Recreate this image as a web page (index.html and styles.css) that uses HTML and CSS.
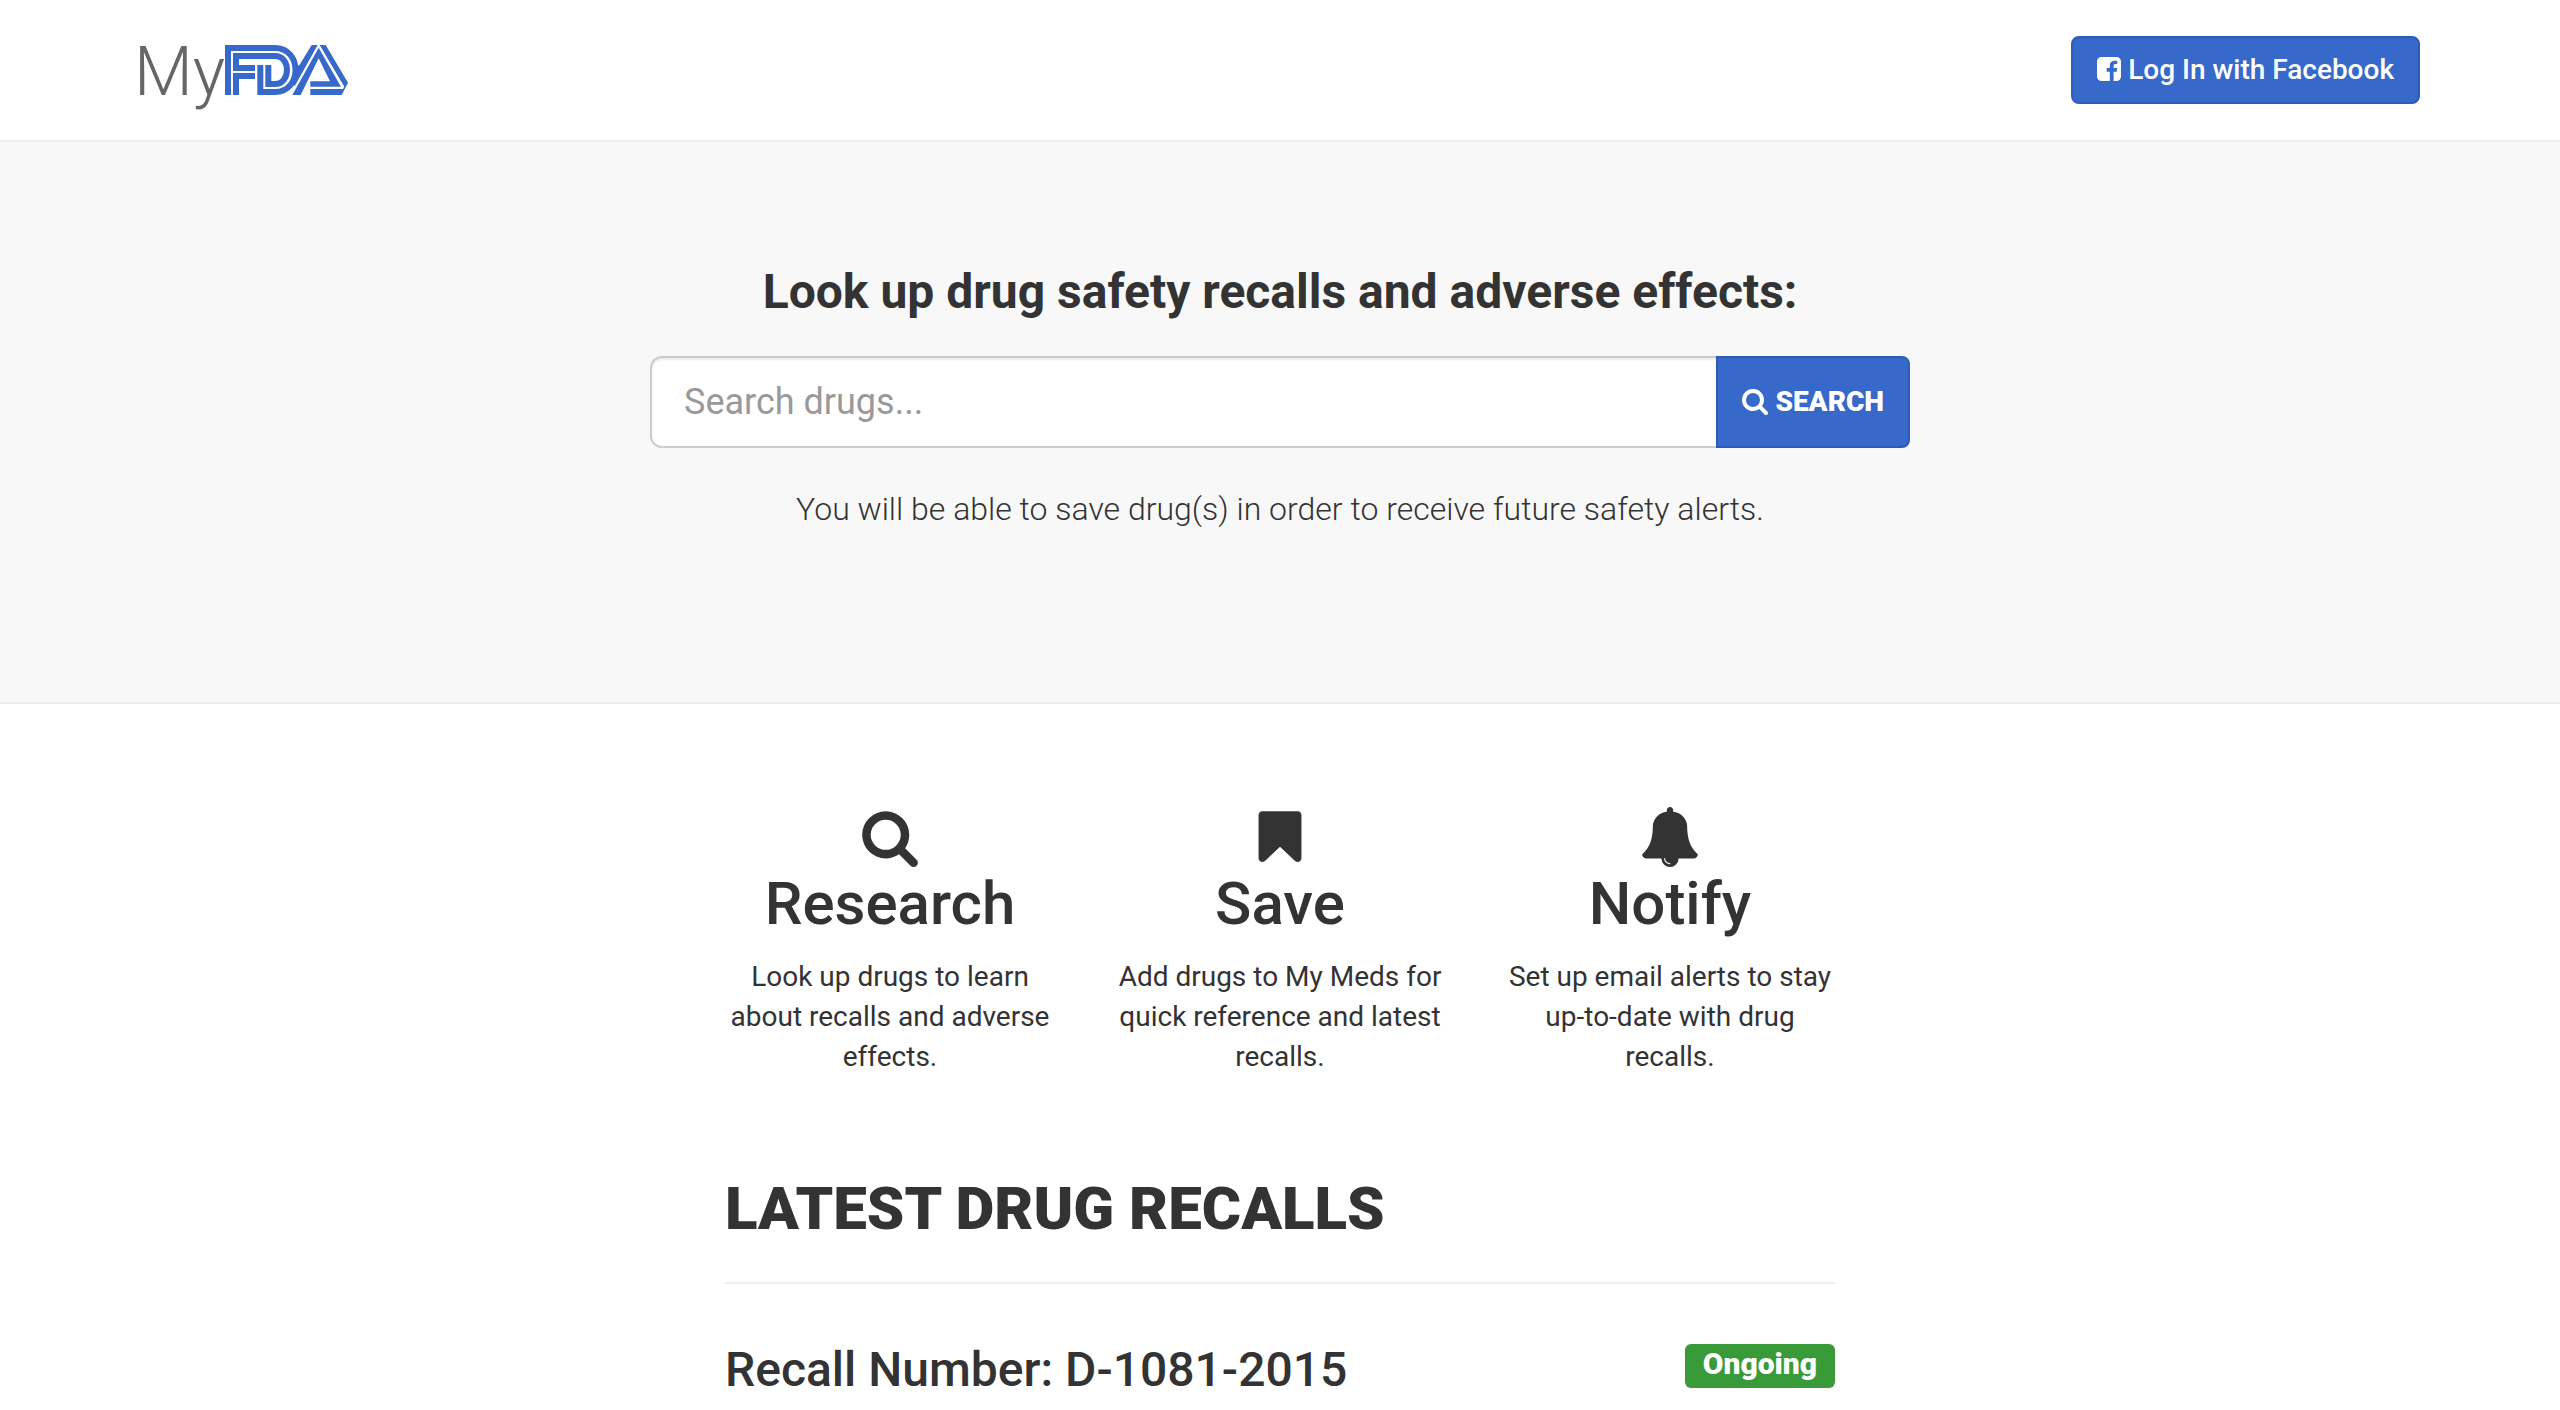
FILE: index.html
```html
<!DOCTYPE html>
<html lang="en">
<head>
<meta charset="utf-8">
<meta name="viewport" content="width=device-width, initial-scale=1">
<title>MyFDA</title>
<link rel="stylesheet" href="styles.css">
</head>
<body>
<header class="site-header">
  <div class="container header-row">
    <a class="brand" href="#">
      <span class="brand-my">My</span>
      <svg class="brand-mark" viewBox="0 0 369 150" role="img" aria-label="FDA">
        <g fill="none" stroke="#3669c9" stroke-width="18">
          <path d="M9 150V9H150C232 9 232 141 150 141H106V60"/>
          <path d="M33 78V33H150C198 33 198 117 150 117H130V60"/>
          <path d="M33 150V93H90M24 69H90"/>
        </g>
        <g fill="#3669c9">
          <path d="M260 0H278L210 122L200 118L214 66L224 59Z"/>
          <path d="M281 8L202 150H227L281 40L315 109H256V125H348Z"/>
          <path d="M284 0H302L369 113L350 150H256V132H354L358 125Z"/>
        </g>
      </svg>
    </a>
    <button class="btn" type="button">
      <svg class="icon" viewBox="0 0 1536 1536" aria-hidden="true"><path d="M1248 0q119 0 203.500 84.500T1536 288v960q0 119-84.500 203.500T1248 1536h-188V941h199l30-232h-229V561q0-56 23.500-84t91.500-28l122-1V241q-63-9-178-9-136 0-217.500 80T820 538v171H620v232h200v595H288q-119 0-203.500-84.500T0 1248V288Q0 169 84.500 84.500T288 0z"/></svg>
      Log In with Facebook
    </button>
  </div>
</header>

<section class="hero">
  <form class="search" role="search">
    <label class="search-title" for="drug">Look up drug safety recalls and adverse effects:</label>
    <div class="input-group">
      <input class="search-input" id="drug" type="text" placeholder="Search drugs...">
      <button class="btn btn-search" type="submit">
        <svg class="icon" viewBox="0 0 1664 1664" aria-hidden="true"><path d="M1152 704q0-185-131.500-316.500T704 256 387.500 387.500 256 704t131.500 316.500T704 1152t316.500-131.500T1152 704zm512 832q0 52-38 90t-90 38q-54 0-90-38l-343-342q-179 124-399 124-143 0-273.500-55.500t-225-150-150-225T0 704t55.500-273.500 150-225 225-150T704 0t273.500 55.500 225 150 150 225T1408 704q0 220-124 399l343 343q37 37 37 90z"/></svg>
        SEARCH
      </button>
    </div>
    <p class="search-note">You will be able to save drug(s) in order to receive future safety alerts.</p>
  </form>
</section>

<main class="content">
  <div class="features">
    <section class="feature">
      <svg class="feature-icon" viewBox="-64 -128 1792 1792" aria-hidden="true"><path d="M1152 704q0-185-131.500-316.500T704 256 387.500 387.500 256 704t131.500 316.500T704 1152t316.500-131.500T1152 704zm512 832q0 52-38 90t-90 38q-54 0-90-38l-343-342q-179 124-399 124-143 0-273.500-55.500t-225-150-150-225T0 704t55.500-273.500 150-225 225-150T704 0t273.500 55.500 225 150 150 225T1408 704q0 220-124 399l343 343q37 37 37 90z"/></svg>
      <h2 class="feature-title">Research</h2>
      <p class="feature-text">Look up drugs to learn about recalls and adverse effects.</p>
    </section>
    <section class="feature">
      <svg class="feature-icon" viewBox="-256 -128 1792 1792" aria-hidden="true"><path d="M1164 0q23 0 44 9 33 13 52.500 41t19.500 62v1289q0 34-19.500 62t-52.500 41q-19 8-44 8-48 0-83-32l-441-424-441 424q-36 33-83 33-23 0-44-9-33-13-52.500-41T0 1401V112q0-34 19.500-62T72 9q21-9 44-9z"/></svg>
      <h2 class="feature-title">Save</h2>
      <p class="feature-text">Add drugs to My Meds for quick reference and latest recalls.</p>
    </section>
    <section class="feature">
      <svg class="feature-icon" viewBox="0 0 1792 1792" aria-hidden="true"><path d="M912 1696q0-16-16-16-59 0-101.500-42.500T752 1536q0-16-16-16t-16 16q0 73 51.500 124.500T896 1712q16 0 16-16zm816-288q0 52-38 90t-90 38h-448q0 106-75 181t-181 75-181-75-75-181H192q-52 0-90-38t-38-90q50-42 91-88t85-119.500 74.500-158.500 50-206T384 576q0-152 117-282.500T808 135q-8-19-8-39 0-40 28-68t68-28 68 28 28 68q0 20-8 39 190 28 307 158.500T1408 576q0 139 19.500 260t50 206 74.500 158.500 85 119.500 91 88z"/></svg>
      <h2 class="feature-title">Notify</h2>
      <p class="feature-text">Set up email alerts to stay up-to-date with drug recalls.</p>
    </section>
  </div>

  <h2 class="recalls-title">LATEST DRUG RECALLS</h2>
  <article class="recall">
    <h3 class="recall-number">Recall Number: D-1081-2015</h3>
    <span class="badge">Ongoing</span>
  </article>
</main>
</body>
</html>
```
FILE: styles.css
```css
* { box-sizing: border-box; }

body {
  margin: 0;
  font-family: Roboto, "Liberation Sans", sans-serif;
  font-size: 28px;
  line-height: 40px;
  color: #333;
  background: #fff;
}

h2, h3, p { margin: 0; }

.site-header { border-bottom: 2px solid #eee; }

.container {
  max-width: 2340px;
  margin: 0 auto;
  padding: 0 30px;
}

.header-row {
  display: flex;
  align-items: center;
  justify-content: space-between;
  padding-top: 36px;
  padding-bottom: 36px;
}

.brand {
  display: flex;
  align-items: baseline;
  height: 68px;
  margin-left: -6px;
  padding-top: 2px;
  color: #666;
  text-decoration: none;
}

.brand-my {
  font-size: 68px;
  font-weight: 300;
  line-height: 68px;
}

.brand-mark { width: 123px; height: 50px; }

.btn {
  padding: 12px 24px;
  border: 2px solid #2d5cb8;
  border-radius: 8px;
  background: #3669c9;
  color: #fff;
  font: 500 28px/40px Roboto, "Liberation Sans", sans-serif;
  white-space: nowrap;
}

.icon {
  height: 24px;
  vertical-align: -2px;
  fill: currentColor;
}

.hero {
  padding: 120px 30px 169px;
  border-bottom: 2px solid #eee;
  background: #f8f8f8;
  text-align: center;
}

.search {
  max-width: 1260px;
  margin: 0 auto;
}

.search-title {
  display: block;
  margin-bottom: 34px;
  font-size: 48px;
  font-weight: 700;
  line-height: 60px;
}

.input-group { display: flex; }

.search-input {
  flex: 1;
  min-width: 0;
  height: 92px;
  padding: 0 32px;
  border: 2px solid #ccc;
  border-right: 0;
  border-radius: 12px 0 0 12px;
  background: #fff;
  box-shadow: inset 0 2px 2px rgba(0, 0, 0, 0.075);
  color: #555;
  font: 400 36px/48px Roboto, "Liberation Sans", sans-serif;
}

.search-input::placeholder { color: #999; opacity: 1; }

.btn-search {
  border-radius: 0 8px 8px 0;
  font-weight: 900;
}

.btn-search .icon {
  height: 26px;
  vertical-align: -4px;
}

.search-note {
  margin-top: 37px;
  font-size: 32px;
  font-weight: 300;
  line-height: 48px;
}

.content {
  max-width: 1170px;
  margin: 0 auto;
  padding: 103px 30px 0;
}

.features {
  display: grid;
  grid-template-columns: repeat(3, 1fr);
  gap: 60px;
  text-align: center;
}

.feature-icon {
  display: block;
  width: 60px;
  height: 60px;
  margin: 0 auto 4px;
  fill: currentColor;
}

.feature-title {
  margin-bottom: 20px;
  font-size: 60px;
  font-weight: 500;
  line-height: 66px;
}

.recalls-title {
  margin-top: 99px;
  padding-bottom: 40px;
  border-bottom: 2px solid #eee;
  font-size: 60px;
  font-weight: 900;
  line-height: 66px;
}

.recall {
  display: flex;
  justify-content: space-between;
  align-items: flex-start;
  padding: 60px 0;
}

.recall-number {
  font-size: 48px;
  font-weight: 500;
  line-height: 52px;
}

.badge {
  padding: 0 18px 4px;
  border-radius: 6px;
  background: #399a39;
  color: #fff;
  font-size: 30px;
  font-weight: 900;
}
```
